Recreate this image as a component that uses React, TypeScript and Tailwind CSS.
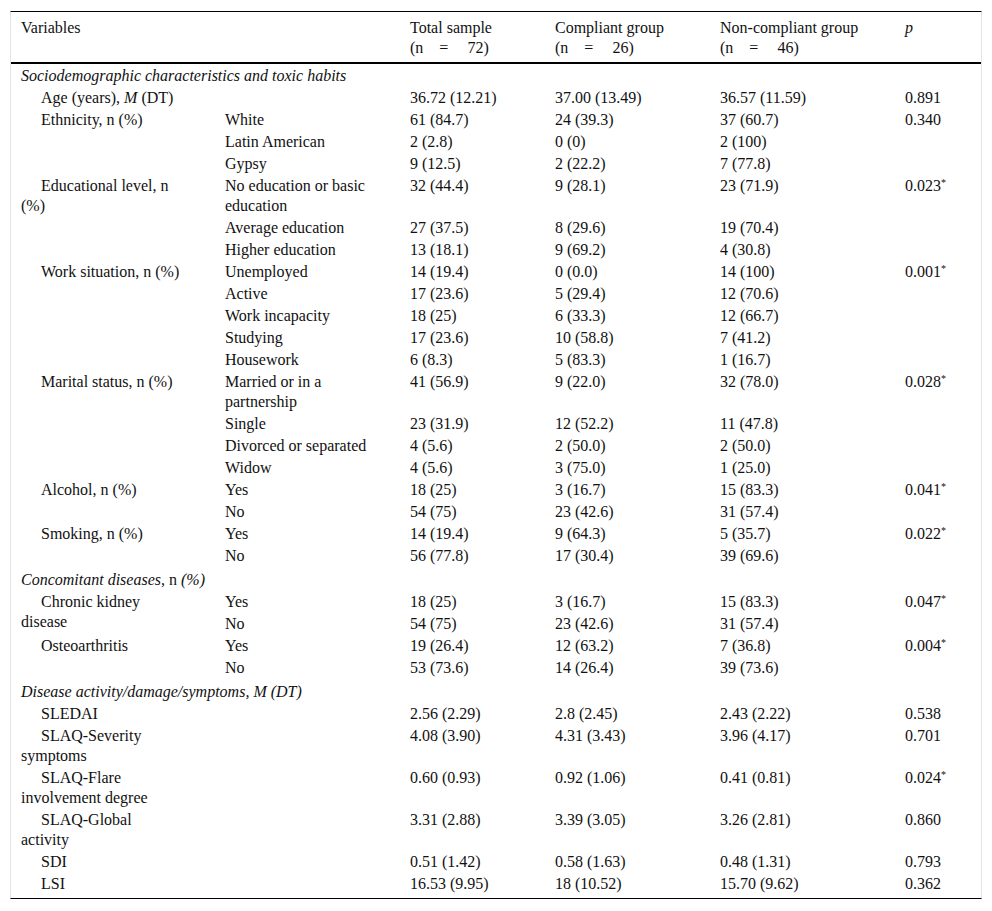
import React from 'react';

interface SubRow {
  sub?: React.ReactNode;
  total: string;
  comp: string;
  non: string;
  p?: string;
  sig?: boolean;
}

interface Group {
  label: React.ReactNode;
  rows: SubRow[];
}

interface Section {
  title: React.ReactNode;
  groups: Group[];
}

const sections: Section[] = [
  {
    title: <i>Sociodemographic characteristics and toxic habits</i>,
    groups: [
      {
        label: <>Age (years), <i>M</i> (DT)</>,
        rows: [{ total: '36.72 (12.21)', comp: '37.00 (13.49)', non: '36.57 (11.59)', p: '0.891' }],
      },
      {
        label: 'Ethnicity, n (%)',
        rows: [
          { sub: 'White', total: '61 (84.7)', comp: '24 (39.3)', non: '37 (60.7)', p: '0.340' },
          { sub: 'Latin American', total: '2 (2.8)', comp: '0 (0)', non: '2 (100)' },
          { sub: 'Gypsy', total: '9 (12.5)', comp: '2 (22.2)', non: '7 (77.8)' },
        ],
      },
      {
        label: <>Educational level, n<br />(%)</>,
        rows: [
          { sub: <>No education or basic<br />education</>, total: '32 (44.4)', comp: '9 (28.1)', non: '23 (71.9)', p: '0.023', sig: true },
          { sub: 'Average education', total: '27 (37.5)', comp: '8 (29.6)', non: '19 (70.4)' },
          { sub: 'Higher education', total: '13 (18.1)', comp: '9 (69.2)', non: '4 (30.8)' },
        ],
      },
      {
        label: 'Work situation, n (%)',
        rows: [
          { sub: 'Unemployed', total: '14 (19.4)', comp: '0 (0.0)', non: '14 (100)', p: '0.001', sig: true },
          { sub: 'Active', total: '17 (23.6)', comp: '5 (29.4)', non: '12 (70.6)' },
          { sub: 'Work incapacity', total: '18 (25)', comp: '6 (33.3)', non: '12 (66.7)' },
          { sub: 'Studying', total: '17 (23.6)', comp: '10 (58.8)', non: '7 (41.2)' },
          { sub: 'Housework', total: '6 (8.3)', comp: '5 (83.3)', non: '1 (16.7)' },
        ],
      },
      {
        label: 'Marital status, n (%)',
        rows: [
          { sub: <>Married or in a<br />partnership</>, total: '41 (56.9)', comp: '9 (22.0)', non: '32 (78.0)', p: '0.028', sig: true },
          { sub: 'Single', total: '23 (31.9)', comp: '12 (52.2)', non: '11 (47.8)' },
          { sub: 'Divorced or separated', total: '4 (5.6)', comp: '2 (50.0)', non: '2 (50.0)' },
          { sub: 'Widow', total: '4 (5.6)', comp: '3 (75.0)', non: '1 (25.0)' },
        ],
      },
      {
        label: 'Alcohol, n (%)',
        rows: [
          { sub: 'Yes', total: '18 (25)', comp: '3 (16.7)', non: '15 (83.3)', p: '0.041', sig: true },
          { sub: 'No', total: '54 (75)', comp: '23 (42.6)', non: '31 (57.4)' },
        ],
      },
      {
        label: 'Smoking, n (%)',
        rows: [
          { sub: 'Yes', total: '14 (19.4)', comp: '9 (64.3)', non: '5 (35.7)', p: '0.022', sig: true },
          { sub: 'No', total: '56 (77.8)', comp: '17 (30.4)', non: '39 (69.6)' },
        ],
      },
    ],
  },
  {
    title: <><i>Concomitant diseases</i>, n <i>(%)</i></>,
    groups: [
      {
        label: <>Chronic kidney<br />disease</>,
        rows: [
          { sub: 'Yes', total: '18 (25)', comp: '3 (16.7)', non: '15 (83.3)', p: '0.047', sig: true },
          { sub: 'No', total: '54 (75)', comp: '23 (42.6)', non: '31 (57.4)' },
        ],
      },
      {
        label: 'Osteoarthritis',
        rows: [
          { sub: 'Yes', total: '19 (26.4)', comp: '12 (63.2)', non: '7 (36.8)', p: '0.004', sig: true },
          { sub: 'No', total: '53 (73.6)', comp: '14 (26.4)', non: '39 (73.6)' },
        ],
      },
    ],
  },
  {
    title: <i>Disease activity/damage/symptoms, M (DT)</i>,
    groups: [
      { label: 'SLEDAI', rows: [{ total: '2.56 (2.29)', comp: '2.8 (2.45)', non: '2.43 (2.22)', p: '0.538' }] },
      { label: <>SLAQ-Severity<br />symptoms</>, rows: [{ total: '4.08 (3.90)', comp: '4.31 (3.43)', non: '3.96 (4.17)', p: '0.701' }] },
      { label: <>SLAQ-Flare<br />involvement degree</>, rows: [{ total: '0.60 (0.93)', comp: '0.92 (1.06)', non: '0.41 (0.81)', p: '0.024', sig: true }] },
      { label: <>SLAQ-Global<br />activity</>, rows: [{ total: '3.31 (2.88)', comp: '3.39 (3.05)', non: '3.26 (2.81)', p: '0.860' }] },
      { label: 'SDI', rows: [{ total: '0.51 (1.42)', comp: '0.58 (1.63)', non: '0.48 (1.31)', p: '0.793' }] },
      { label: 'LSI', rows: [{ total: '16.53 (9.95)', comp: '18 (10.52)', non: '15.70 (9.62)', p: '0.362' }] },
    ],
  },
];

const td = 'px-[10px] pt-[2px] pb-0 align-top whitespace-nowrap';
const th = 'px-[10px] pt-[6px] pb-[4px] align-top text-left font-normal whitespace-nowrap border-b-2 border-black';

export default function App() {
  return (
    <div className="min-h-screen bg-white pt-[11px] px-[10px] text-[16px] leading-[20px] text-[#111] font-['Liberation_Serif','Times_New_Roman',serif]">
      <div className="w-[972px] border-t border-b border-t-black border-b-black border-x border-x-[#e3e3e3] pb-[4px]">
        <table className="w-full table-fixed">
          <colgroup>
            <col className="w-[204px]" />
            <col className="w-[185px]" />
            <col className="w-[145px]" />
            <col className="w-[165px]" />
            <col className="w-[185px]" />
            <col className="w-[86px]" />
          </colgroup>
          <thead>
            <tr>
              <th className={th}>Variables</th>
              <th className={th}></th>
              <th className={th}>Total sample<br />(n{'\u2003'}={'\u2003\u2009'}72)</th>
              <th className={th}>Compliant group<br />(n{'\u2003'}={'\u2003\u2009'}26)</th>
              <th className={th}>Non-compliant group<br />(n{'\u2003'}={'\u2003\u2009'}46)</th>
              <th className={th}><i>p</i></th>
            </tr>
          </thead>
          <tbody>
            {sections.map((section, si) => (
              <React.Fragment key={si}>
                <tr>
                  <td colSpan={6} className={`px-[10px] pb-0 whitespace-nowrap ${si === 0 ? 'pt-[2px]' : 'pt-[4px]'}`}>
                    {section.title}
                  </td>
                </tr>
                {section.groups.map((group, gi) =>
                  group.rows.map((row, ri) => (
                    <tr key={`${gi}-${ri}`}>
                      {ri === 0 && (
                        <td rowSpan={group.rows.length} className={`${td} indent-[20px]`}>
                          {group.label}
                        </td>
                      )}
                      <td className={td}>{row.sub}</td>
                      <td className={td}>{row.total}</td>
                      <td className={td}>{row.comp}</td>
                      <td className={td}>{row.non}</td>
                      <td className={td}>
                        {row.p}
                        {row.sig && <sup className="text-[10px]">*</sup>}
                      </td>
                    </tr>
                  ))
                )}
              </React.Fragment>
            ))}
          </tbody>
        </table>
      </div>
    </div>
  );
}
